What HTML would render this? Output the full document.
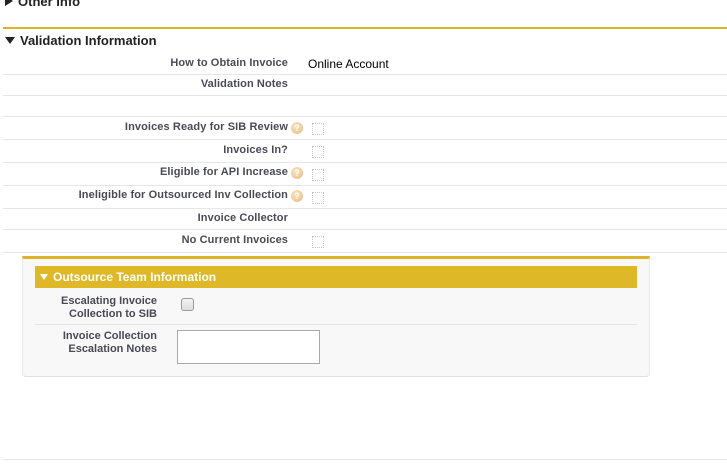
<!DOCTYPE html>
<html><head><style>
body{margin:0;width:727px;height:469px;background:#fff;font-family:"Liberation Sans",Arial,sans-serif;position:relative;overflow:hidden;color:#000}
.a{position:absolute}
.lbl{position:absolute;right:439px;font-size:11px;font-weight:bold;color:#4a4a56;white-space:nowrap;letter-spacing:0.1px}
.ln{position:absolute;left:3px;width:724px;height:1px;background:#e6e6e6}
.cb{position:absolute;left:312px;width:10px;height:10px;border:1px dotted #c8c8c8}
.hp{position:absolute;left:291px;width:12px;height:12px;border-radius:50%;background:radial-gradient(circle at 40% 35%,#fbe6c4,#e8b97a);color:#fff;font-size:9px;font-weight:bold;text-align:center;line-height:12px}
.l2{position:absolute;right:570px;font-size:11px;font-weight:bold;color:#4a4a56;text-align:right;line-height:13px}
.tri{display:inline-block;width:0;height:0;border-left:5px solid transparent;border-right:5px solid transparent;border-top:7px solid #222;margin-right:5px;vertical-align:1px}
</style></head><body>
<div class="a" style="left:5px;top:-6px;font-size:13px;font-weight:bold;color:#222"><span style="display:inline-block;width:0;height:0;border-top:5px solid transparent;border-bottom:5px solid transparent;border-left:8px solid #222;margin-right:5px"></span>Other Info</div>
<div class="a" style="left:3px;top:27px;width:724px;height:2px;background:#dcb42a"></div>
<div class="a" style="left:5px;top:33px;font-size:13px;font-weight:bold;color:#222"><span class="tri"></span>Validation Information</div>
<div class="lbl" style="top:57px">How to Obtain Invoice</div>
<div class="a" style="left:308px;top:57px;font-size:12px">Online Account</div>
<div class="ln" style="top:74px"></div>
<div class="lbl" style="top:78px">Validation Notes</div>
<div class="ln" style="top:95px"></div>
<div class="ln" style="top:116px"></div>
<div class="lbl" style="top:121px">Invoices Ready for SIB Review</div><div class="hp" style="top:122px">?</div><div class="cb" style="top:123px"></div>
<div class="ln" style="top:139px"></div>
<div class="lbl" style="top:144px">Invoices In?</div><div class="cb" style="top:146px"></div>
<div class="ln" style="top:162px"></div>
<div class="lbl" style="top:166px">Eligible for API Increase</div><div class="hp" style="top:167px">?</div><div class="cb" style="top:169px"></div>
<div class="ln" style="top:185px"></div>
<div class="lbl" style="top:189px">Ineligible for Outsourced Inv Collection</div><div class="hp" style="top:190px">?</div><div class="cb" style="top:192px"></div>
<div class="ln" style="top:208px"></div>
<div class="lbl" style="top:212px">Invoice Collector</div>
<div class="ln" style="top:229px"></div>
<div class="lbl" style="top:234px">No Current Invoices</div><div class="cb" style="top:236px"></div>
<div class="ln" style="top:252px"></div>
<div class="a" style="left:22px;top:256px;width:626px;height:117px;background:#f8f8f8;border-top:3px solid #dcb42a;border-left:1px solid #eaeaea;border-right:1px solid #eaeaea;border-bottom:1px solid #e0e0e0;border-radius:0 0 4px 4px"></div>
<div class="a" style="left:35px;top:266px;width:602px;height:22px;background:#dfb828;color:#fff;font-size:12px;font-weight:bold;line-height:22px;padding-left:5px;box-sizing:border-box"><span style="display:inline-block;width:0;height:0;border-left:4px solid transparent;border-right:4px solid transparent;border-top:6px solid #fff;margin-right:5px;vertical-align:1px"></span>Outsource Team Information</div>
<div class="l2" style="top:295px">Escalating Invoice<br>Collection to SIB</div>
<div class="a" style="left:181px;top:298px;width:11px;height:11px;border:1px solid #999;border-radius:3px;background:linear-gradient(#f4f4f4,#dcdcdc)"></div>
<div class="a" style="left:35px;top:324px;width:602px;height:1px;background:#e3e3e3"></div>
<div class="l2" style="top:330px">Invoice Collection<br>Escalation Notes</div>
<div class="a" style="left:177px;top:330px;width:141px;height:32px;border:1px solid #a9a9a9;background:#fff"></div>
<div class="a" style="left:3px;top:459px;width:724px;height:1px;background:#e6e6e6"></div>
</body></html>
